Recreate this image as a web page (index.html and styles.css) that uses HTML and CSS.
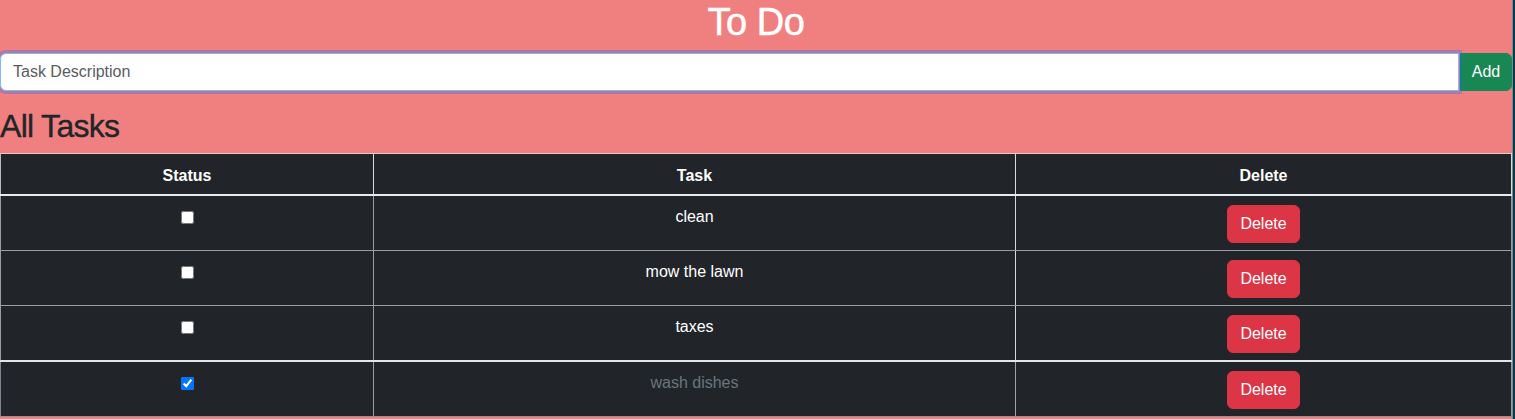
FILE: index.html
```html
<!DOCTYPE html>
<html lang="en">
<head>
<meta charset="utf-8">
<title>To Do</title>
<link rel="stylesheet" href="styles.css">
</head>
<body>
<div class="frame">
  <main class="app">
    <h1 class="title">To Do</h1>
    <form class="input-group">
      <input class="task-input" type="text" placeholder="Task Description">
      <button class="btn-add" type="button">Add</button>
    </form>
    <h2 class="section">All Tasks</h2>
    <table class="tasks">
      <colgroup>
        <col class="c-status">
        <col class="c-task">
        <col class="c-del">
      </colgroup>
      <thead>
        <tr><th>Status</th><th>Task</th><th>Delete</th></tr>
      </thead>
      <tbody>
        <tr><td><input type="checkbox" class="chk"></td><td>clean</td><td><button class="btn-del" type="button">Delete</button></td></tr>
        <tr><td><input type="checkbox" class="chk"></td><td>mow the lawn</td><td><button class="btn-del" type="button">Delete</button></td></tr>
        <tr class="before-done"><td><input type="checkbox" class="chk"></td><td>taxes</td><td><button class="btn-del" type="button">Delete</button></td></tr>
        <tr class="done"><td><input type="checkbox" class="chk" checked></td><td class="done-text">wash dishes</td><td><button class="btn-del" type="button">Delete</button></td></tr>
      </tbody>
    </table>
  </main>
  <div class="edge"></div>
</div>
</body>
</html>
```

FILE: styles.css
```css
* { box-sizing: border-box; }

html, body {
  margin: 0;
  padding: 0;
  height: 100%;
}

body {
  background: #f08080;
  font-family: "Liberation Sans", Arial, sans-serif;
  font-size: 16px;
  color: #212529;
}

.frame {
  display: flex;
  min-height: 100%;
}

.app {
  flex: 1;
  min-width: 0;
}

.edge {
  width: 3px;
  background: #0c3b47;
  border-left: 1px solid #6f8d94;
}

.title {
  margin: 0 0 8px;
  text-align: center;
  color: #fff;
  font-size: 38px;
  font-weight: 500;
  line-height: 45px;
  letter-spacing: -0.5px;
  -webkit-text-stroke: 0.5px currentColor;
}

.input-group {
  display: flex;
  margin: 0;
}

.task-input {
  flex: 1;
  height: 38px;
  padding: 6px 12px;
  font: inherit;
  font-size: 16px;
  color: #212529;
  background: #fff;
  border: 1px solid #86b7fe;
  border-radius: 6px 0 0 6px;
  box-shadow: 0 0 0 3px rgba(13, 110, 253, 0.3);
  outline: none;
  position: relative;
  z-index: 1;
}

.task-input::placeholder {
  color: #595c5f;
}

.btn-add {
  width: 52px;
  height: 38px;
  margin-left: 1px;
  padding: 0;
  font: inherit;
  color: #fff;
  background: #198754;
  border: 1px solid #198754;
  border-radius: 0 6px 6px 0;
}

.section {
  margin: 16px 0 8px;
  font-size: 32px;
  font-weight: 500;
  line-height: 38px;
  letter-spacing: -0.7px;
  -webkit-text-stroke: 0.35px currentColor;
}

.tasks {
  width: 100%;
  border-collapse: collapse;
  background: #212529;
  color: #fff;
  table-layout: fixed;
  border-top: 1px solid #e6c6c6;
}

.c-status { width: 373px; }
.c-task { width: 642px; }

.tasks th,
.tasks td {
  text-align: center;
  vertical-align: top;
  line-height: 24px;
}

.tasks th {
  padding: 10px 8px 6px;
  font-weight: 700;
  border-left: 1px solid #b9bcbf;
  border-right: 1px solid #d9dbdd;
  border-bottom: 2px solid #e9ecef;
}

.tasks td {
  padding: 9px 8px 7px;
  border: 1px solid #9a9ea2;
  border-top: 0;
}

.tasks td:nth-child(2) {
  border-right-color: #d7d9db;
}

.tasks tr.before-done td {
  border-bottom: 2px solid #e3e5e7;
}

.tasks tr.done td {
  border-left-color: #7f8590;
  border-bottom-color: #8f949a;
}

.tasks tr.done td:nth-child(2) {
  border-right-color: #9fa3a8;
}

.chk {
  width: 13px;
  height: 13px;
  margin: 6px 0 0;
  vertical-align: top;
}

.done-text {
  color: #6c757d;
}

.btn-del {
  height: 38px;
  padding: 6px 12px;
  font: inherit;
  line-height: 24px;
  color: #fff;
  background: #dc3545;
  border: 1px solid #dc3545;
  border-radius: 6px;
}
```
